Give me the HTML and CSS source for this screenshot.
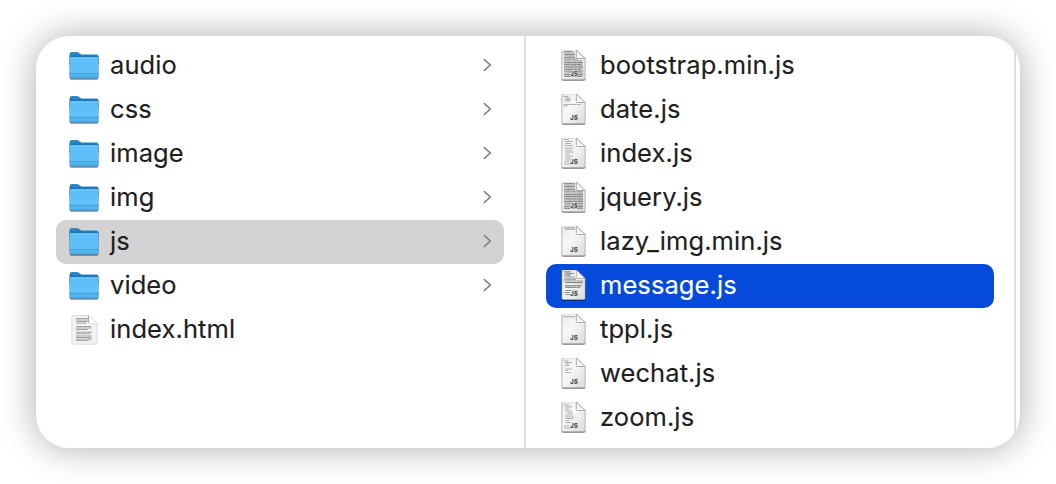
FILE: index.html
```html
<!DOCTYPE html>
<html lang="en">
<head>
<meta charset="utf-8">
<title>Files</title>
<link rel="stylesheet" href="styles.css">
</head>
<body>
<main class="browser">
  <svg class="defs" width="0" height="0" aria-hidden="true">
    <defs>
      <linearGradient id="front" x1="0" y1="0" x2="0" y2="1"><stop offset="0" stop-color="#5dc0f8"/><stop offset=".7" stop-color="#60c0f9"/><stop offset="1" stop-color="#4cafea"/></linearGradient>
      <linearGradient id="back" gradientUnits="userSpaceOnUse" x1="0" y1="2" x2="0" y2="9"><stop offset="0" stop-color="#3290cf"/><stop offset="1" stop-color="#1269aa"/></linearGradient>
      <linearGradient id="paper" x1="0" y1="0" x2="1" y2="1"><stop offset="0" stop-color="#e8e8e8"/><stop offset=".4" stop-color="#f8f8f8"/><stop offset="1" stop-color="#dadada"/></linearGradient>
      <linearGradient id="fold" x1="0" y1="1" x2="1" y2="0"><stop offset="0" stop-color="#fff"/><stop offset=".5" stop-color="#f4f4f4"/><stop offset="1" stop-color="#ccc"/></linearGradient>
      <pattern id="type" width="11" height="6" patternUnits="userSpaceOnUse">
        <rect width="11" height="6" fill="#b4b4b4"/>
        <path d="M0 1h3M3.6 1h4.600M9 1h2M0 3h1.500M2.100 3h5M7.700 3h3.300M0 5h4.400M5 5h2.200M7.900 5h3.100" stroke="#8c8c8c" stroke-width="2"/>
      </pattern>
      <symbol id="folder" viewBox="0 0 32 32">
        <path d="M1.600 4.200Q1.600 2 3.700 2h5.400q1.100 0 1.900.7l1.200 1q.8.7 1.800.7h14.500q2 0 2 2V15H1.600z" fill="url(#back)"/>
        <path d="M1.600 8.600Q1.600 7.300 2.900 7.300h26.300q1.300 0 1.300 1.300v18.100q0 1.800-1.800 1.800H3.400q-1.800 0-1.800-1.800z" fill="url(#front)"/>
        <path d="M2.200 7.900h27.700" stroke="#82d0fb" stroke-width=".8"/>
        <path d="M1.600 23.500h28.900" stroke="#3797d6" stroke-width=".7"/>
        <path d="M1.600 25h28.900" stroke="#3797d6" stroke-width=".3"/>
        <path d="M2.300 28h27.500" stroke="#3a8ec8" stroke-width=".8"/>
      </symbol>
      <symbol id="page" viewBox="0 0 32 32">
        <path d="M4.900-.2h13.400L27 8.500v19.800q0 1.200-1.200 1.200H5.200Q4 29.500 4 28.300V.8Q4-.2 4.900-.2z" fill="url(#paper)" stroke="#b2b2b2" stroke-width=".6"/>
      </symbol>
      <symbol id="corner" viewBox="0 0 32 32">
        <path d="M18.300-.2v7.500q0 1.200 1.200 1.200H27z" fill="url(#fold)" stroke="#8b8b8b" stroke-width=".7"/>
      </symbol>
      <symbol id="js" viewBox="0 0 32 32">
        <text x="16.200" y="26" text-anchor="middle" class="badge">JS</text>
      </symbol>
      <symbol id="arrow" viewBox="0 0 10 14"><path d="M2.300 1.500L8.300 7l-6 5.500"/></symbol>
    </defs>
  </svg>
  <ul class="column">
    <li class="row"><svg class="icon"><use href="#folder"/></svg><span class="name">audio</span><svg class="chevron"><use href="#arrow"/></svg></li>
    <li class="row"><svg class="icon"><use href="#folder"/></svg><span class="name">css</span><svg class="chevron"><use href="#arrow"/></svg></li>
    <li class="row"><svg class="icon"><use href="#folder"/></svg><span class="name">image</span><svg class="chevron"><use href="#arrow"/></svg></li>
    <li class="row"><svg class="icon"><use href="#folder"/></svg><span class="name">img</span><svg class="chevron"><use href="#arrow"/></svg></li>
    <li class="row open"><svg class="icon"><use href="#folder"/></svg><span class="name">js</span><svg class="chevron"><use href="#arrow"/></svg></li>
    <li class="row"><svg class="icon"><use href="#folder"/></svg><span class="name">video</span><svg class="chevron"><use href="#arrow"/></svg></li>
    <li class="row"><svg class="icon html" viewBox="0 0 32 32"><path d="M5.500 1.500h15.200L29 9.500v19q0 1.500-1.500 1.500h-22Q4 30 4 28.500V3q0-1.500 1.500-1.500z" fill="#f2f2f2" stroke="#d2d2d2" stroke-width=".5"/><path class="ink" d="M8 4.500h12M8 6h11.500M8 7.500h12M8 9.200h10M8 12.500h15M8 14h16M8 15.500h12M8 18.200h16M8 19.700h14M8 22h16M8 23.500h15M8 25h16M8 26.500h13"/><path d="M20.700 1.500v6.500q0 1.500 1.500 1.500H29z" fill="#fff" stroke="#ccc" stroke-width=".4"/><path d="M20.400 2v7" stroke="#888" stroke-width=".7"/></svg><span class="name">index.html</span></li>
  </ul>
  <ul class="column">
    <li class="row"><svg class="icon" viewBox="0 0 32 32"><use href="#page"/><path class="ink dense" d="M6 1.500h9M6 3h11M6 4.500h11M6 6h11M6 7.500h11M6 9.200h14M6 11h18M6 12.700h19M6 14.400h18M6 16.100h19M6 17.800h19M6 19.500h17M6 21.200h19M6 23h19M6 24.700h19M6 26.400h18"/><use href="#corner"/><use href="#js"/></svg><span class="name">bootstrap.min.js</span></li>
    <li class="row"><svg class="icon" viewBox="0 0 32 32"><use href="#page"/><path class="ink faint" d="M5.500 2.500h5M7 4h5M7 5.500h6M7 7h5M5.500 10.500h17M5.500 12h4"/><use href="#corner"/><use href="#js"/></svg><span class="name">date.js</span></li>
    <li class="row"><svg class="icon" viewBox="0 0 32 32"><use href="#page"/><path class="ink faint" d="M6 1.500h5M7 3.500h8M7 5.500h6M7 7.500h8M7 10h9M7 12h7M7 14h9M7 16h5M7 18h8M7 20h6M7 22h6M6 24h5M6 26h6"/><use href="#corner"/><use href="#js"/></svg><span class="name">index.js</span></li>
    <li class="row"><svg class="icon" viewBox="0 0 32 32"><use href="#page"/><path class="ink dense" d="M6 1.500h11M6 3h11M6 4.500h11M6 6h11M6 7.500h11M6 9.200h19M6 11h19M6 12.700h19M6 14.400h19M6 16.100h19M6 17.800h19M6 19.500h19M6 21.200h19M6 23h19M6 24.700h19M6 26.400h19"/><use href="#corner"/><use href="#js"/></svg><span class="name">jquery.js</span></li>
    <li class="row"><svg class="icon" viewBox="0 0 32 32"><use href="#page"/><path class="ink" d="M6.500 1.800h10.500M6.500 3.200h10.500"/><use href="#corner"/><use href="#js"/></svg><span class="name">lazy_img.min.js</span></li>
    <li class="row selected"><svg class="icon" viewBox="0 0 32 32"><use href="#page"/><path class="ink dense" d="M6 1.800h7M7 3.500h9M6 5.200h7M7 7h10M6 9.200h12M6 11h19M7 12.700h18M7 15.700h17M7 17.400h15M7 20.500h10M6 22.500h6M7 24.500h5"/><use href="#corner"/><use href="#js"/></svg><span class="name">message.js</span></li>
    <li class="row"><svg class="icon" viewBox="0 0 32 32"><use href="#page"/><path class="ink" d="M5.500 2.800h11.500"/><use href="#corner"/><use href="#js"/></svg><span class="name">tppl.js</span></li>
    <li class="row"><svg class="icon" viewBox="0 0 32 32"><use href="#page"/><path class="ink faint" d="M6 3h4M7 4.500h7M7 6h4M7 7.500h4M7 11h7M7 12.500h3M7 14.500h6"/><use href="#corner"/><use href="#js"/></svg><span class="name">wechat.js</span></li>
    <li class="row"><svg class="icon" viewBox="0 0 32 32"><use href="#page"/><path class="ink faint" d="M6 3h5M7 5h7M7 7h4M7 9h7M9 11h6M7 13h8M7 15h9M8 16.500h7M7 18.500h4M7 20.500h6M6 24h5M6 26h6"/><use href="#corner"/><use href="#js"/></svg><span class="name">zoom.js</span></li>
  </ul>
</main>
</body>
</html>
```
FILE: styles.css
```css
* { box-sizing: border-box; }
body { margin: 0; height: 484px; padding: 36px; overflow: hidden; background: #fff; font-family: Inter, "Noto Sans", sans-serif; }
.defs { position: absolute; }
.browser { display: flex; width: 984px; height: 412px; overflow: hidden; background: #fff; border-radius: 33px; box-shadow: 0 0 36px rgba(0, 0, 0, .33); }
.column { flex: none; width: 490px; margin: 0; padding: 8px 20px; border-right: 2px solid #dedede; list-style: none; }
.row { display: flex; align-items: center; height: 44px; padding: 0 12px; border-radius: 10px; color: #202020; }
.open { background: #d3d3d3; }
.selected { background: #064adb; color: #fff; }
.icon { flex: none; width: 32px; height: 32px; margin-right: 10px; overflow: visible; filter: drop-shadow(0 1px .7px rgba(0, 0, 0, .5)); }
.html { filter: drop-shadow(0 .5px .6px rgba(0, 0, 0, .25)); }
.name { flex: 1; margin-top: -2px; font-size: 25.5px; line-height: 36px; letter-spacing: .08px; white-space: nowrap; -webkit-text-stroke: .12px currentColor; }
.chevron { width: 10px; height: 14px; margin: -2px 0 0; fill: none; stroke: #777; stroke-width: 1.5; stroke-linecap: round; stroke-linejoin: round; }
.ink { fill: none; stroke: url(#type); stroke-width: .9; opacity: .9; }
.dense { stroke-width: 1.2; opacity: 1; }
.faint { stroke-width: .9; opacity: .75; }
.badge { fill: #333; stroke: #e6e6e6; stroke-width: 1.4px; paint-order: stroke; font: 700 6px Inter, sans-serif; letter-spacing: .2px; }
```
